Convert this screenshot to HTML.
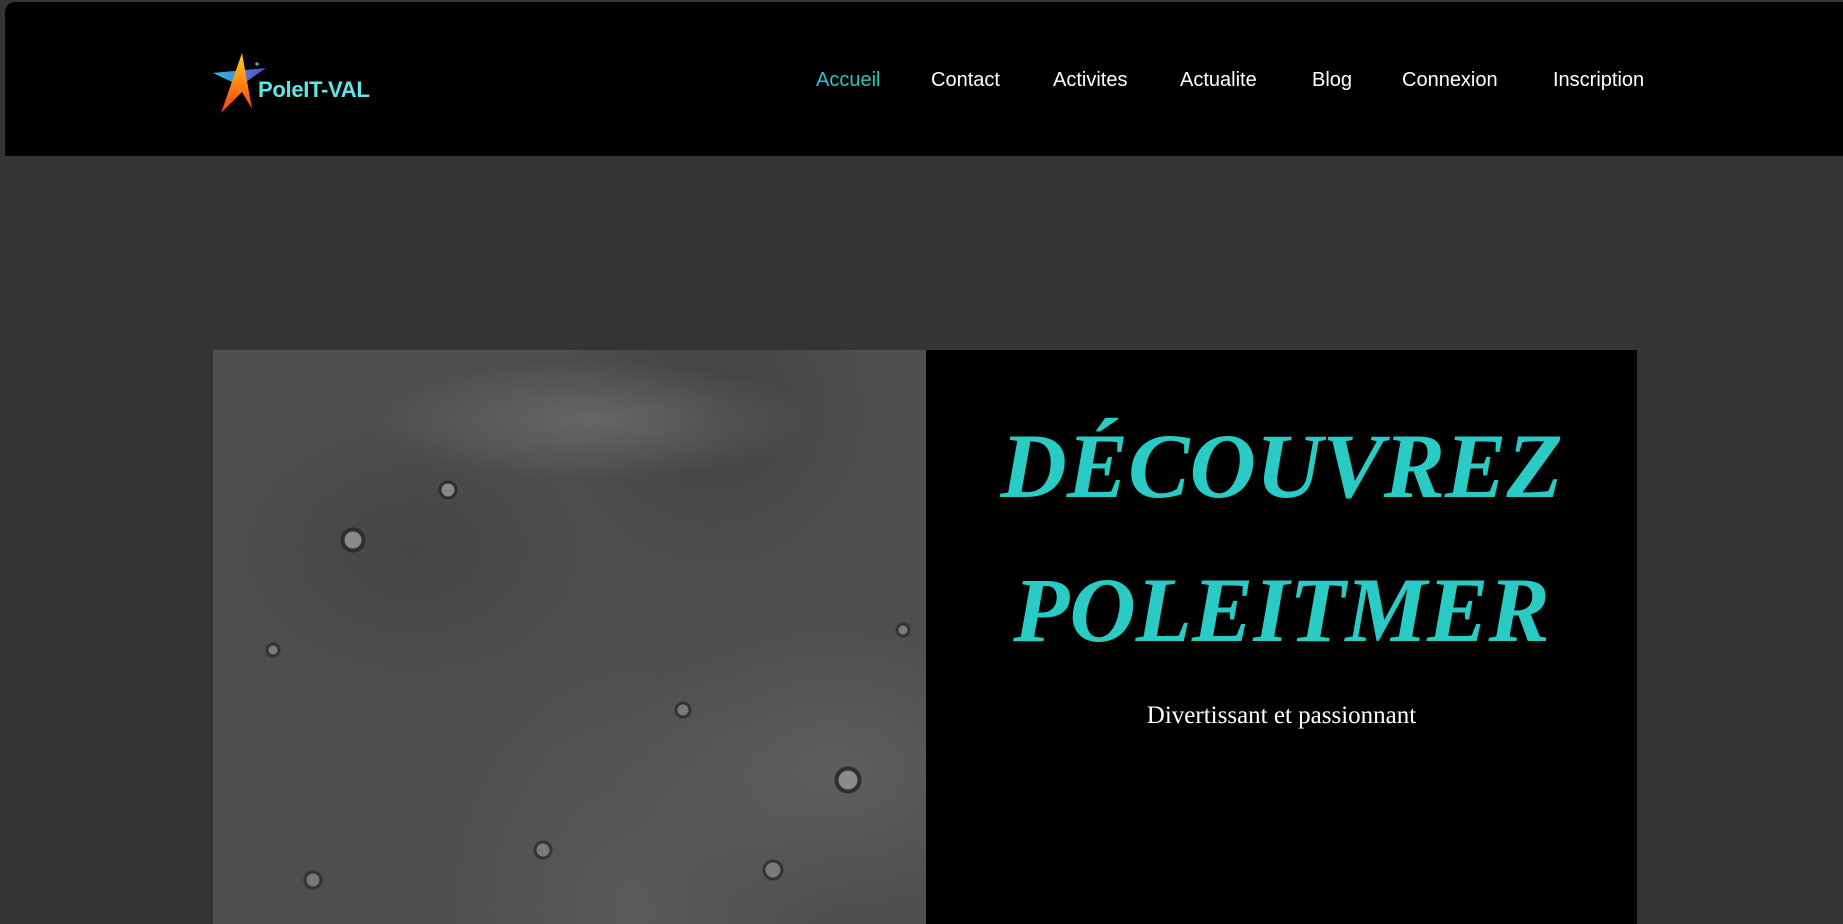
<!DOCTYPE html>
<html><head><meta charset="utf-8"><style>
html,body{margin:0;padding:0;width:1843px;height:924px;overflow:hidden;background:#343434;font-family:"Liberation Sans",sans-serif}
.hdr{position:absolute;left:5px;top:2px;width:1838px;height:154px;background:#000;border-top-left-radius:10px}
.logo{position:absolute;left:212px;top:52px}
.logotext{position:absolute;left:258px;top:77px;font-weight:bold;font-size:22px;color:#5ee8e8;letter-spacing:-0.3px}
.nav{position:absolute;top:69px;font-size:20px;color:#fff;white-space:nowrap}
.moon{position:absolute;left:213px;top:350px;width:713px;height:574px;background:
radial-gradient(circle at 140px 190px,#8a8a8a 0 8px,#2e2e2e 9px 12px,transparent 13px),
radial-gradient(circle at 235px 140px,#888 0 6px,#2e2e2e 7px 9px,transparent 10px),
radial-gradient(circle at 635px 430px,#8a8a8a 0 9px,#2e2e2e 10px 13px,transparent 14px),
radial-gradient(circle at 330px 500px,#7a7a7a 0 6px,#333 7px 9px,transparent 10px),
radial-gradient(circle at 100px 530px,#7a7a7a 0 6px,#333 7px 9px,transparent 10px),
radial-gradient(circle at 470px 360px,#7a7a7a 0 5px,#333 6px 8px,transparent 9px),
radial-gradient(circle at 560px 520px,#7a7a7a 0 7px,#333 8px 10px,transparent 11px),
radial-gradient(circle at 60px 300px,#7a7a7a 0 4px,#333 5px 7px,transparent 8px),
radial-gradient(circle at 690px 280px,#7a7a7a 0 4px,#333 5px 7px,transparent 8px),
radial-gradient(ellipse 220px 60px at 380px 70px,#666 0,transparent 100%),
radial-gradient(ellipse at 500px 60px,#434343 0,transparent 160px),
radial-gradient(ellipse at 200px 200px,#454545 0,transparent 180px),
radial-gradient(ellipse at 620px 420px,#5e5e5e 0,transparent 220px),
radial-gradient(ellipse at 420px 560px,#5a5a5a 0,transparent 200px),
#4e4e4e}
.box{position:absolute;left:926px;top:350px;width:711px;height:574px;background:#000}
.t{position:absolute;left:926px;width:711px;text-align:center;font-family:"Liberation Serif",serif;font-style:italic;font-weight:bold;font-size:92px;color:#2bcbc5;line-height:1}
.sub{position:absolute;left:926px;width:711px;top:702px;text-align:center;font-family:"Liberation Serif",serif;font-size:25px;color:#fff}
</style></head><body>
<div class="hdr"></div>
<svg class="logo" width="56" height="62" viewBox="0 0 56 62">
<defs><linearGradient id="w" x1="0" x2="1"><stop offset="0" stop-color="#22c8e0"/><stop offset="1" stop-color="#6a3fd0"/></linearGradient>
<linearGradient id="o" x1="0" y1="0" x2="0" y2="1"><stop offset="0" stop-color="#ffd21a"/><stop offset="1" stop-color="#ff3a10"/></linearGradient></defs>
<path d="M1 21 L54 16 L34 30 L20 30 Z" fill="url(#w)"/>
<path d="M30 1 L40 57 L30 40 L9 61 Z" fill="url(#o)"/>
<path d="M43 12h4M45 10v4" stroke="#5ee" stroke-width="1"/>
</svg>
<div class="logotext">PoleIT-VAL</div>
<div class="nav" style="left:816px;color:#2bc4c4">Accueil</div>
<div class="nav" style="left:931px">Contact</div>
<div class="nav" style="left:1053px">Activites</div>
<div class="nav" style="left:1180px">Actualite</div>
<div class="nav" style="left:1312px">Blog</div>
<div class="nav" style="left:1402px">Connexion</div>
<div class="nav" style="left:1553px">Inscription</div>
<div class="moon"></div>
<div class="box"></div>
<div class="t" style="top:420px">DÉCOUVREZ</div>
<div class="t" style="top:564px">POLEITMER</div>
<div class="sub">Divertissant et passionnant</div>
</body></html>
